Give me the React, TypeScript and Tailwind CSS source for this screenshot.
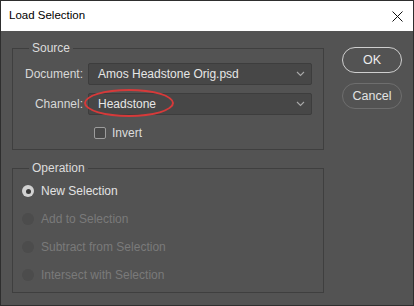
import { useState } from 'react';

const FONT = { fontFamily: '"Liberation Sans", Arial, sans-serif' };

function Chevron() {
  return (
    <svg width="9" height="6" viewBox="0 0 9 6" className="text-[#a8a8a8]">
      <path d="M1 1l3.5 3.5L8 1" fill="none" stroke="currentColor" strokeWidth="1.1" />
    </svg>
  );
}

function Select({ value }: { value: string }) {
  return (
    <div className="flex items-center justify-between h-[22px] w-[224px] bg-[#474747] border border-[#3d3d3d] rounded-[2px] pl-[9px] pr-[6px] text-[#e6e6e6]">
      <span>{value}</span>
      <Chevron />
    </div>
  );
}

function GroupBox({ label, children, className }: { label: string; children: React.ReactNode; className: string }) {
  return (
    <div className={`relative border border-[#3f3f3f] ${className}`}>
      <span className="absolute -top-[9px] left-[16px] px-[3px] bg-[#535353] leading-[16px] text-[#dcdcdc]">
        {label}
      </span>
      {children}
    </div>
  );
}

const OPERATIONS = ['New Selection', 'Add to Selection', 'Subtract from Selection', 'Intersect with Selection'];

export default function App() {
  const [invert, setInvert] = useState(false);

  return (
    <div
      className="w-[414px] h-[306px] border border-[#2e2e2e] bg-[#535353] text-[12px] flex flex-col overflow-hidden"
      style={FONT}
    >
      {/* title bar */}
      <div className="h-[30px] bg-white flex items-center justify-between pl-[8px] pr-[10px] shrink-0">
        <span className="text-[11.5px] text-black">Load Selection</span>
        <svg width="11" height="11" viewBox="0 0 11 11">
          <path d="M0.5 0.5l10 10M10.5 0.5l-10 10" stroke="#111" strokeWidth="1" />
        </svg>
      </div>

      <div className="flex pl-[11px]">
        <div className="w-[312px] pt-[17px]">
          <GroupBox label="Source" className="pt-[14px] pb-[10px]">
            <div className="flex items-center gap-[5px]">
              <span className="w-[70px] text-right text-[#d8d8d8]">Document:</span>
              <Select value="Amos Headstone Orig.psd" />
            </div>
            <div className="flex items-center gap-[5px] mt-[8px]">
              <span className="w-[70px] text-right text-[#d8d8d8]">Channel:</span>
              <div className="relative">
                <Select value="Headstone" />
                <div className="absolute -left-[4px] -top-[4px] w-[90px] h-[28px] rounded-[50%] border-2 border-[#d63a3a]" />
              </div>
            </div>
            <label className="flex items-center gap-[6px] mt-[12px] ml-[81px] h-[12px] cursor-pointer">
              <span
                onClick={() => setInvert(!invert)}
                className="w-[12px] h-[12px] rounded-[2px] border border-[#9c9c9c] bg-[#484848] flex items-center justify-center"
              >
                {invert && <span className="w-[6px] h-[6px] bg-[#d0d0d0]" />}
              </span>
              <span className="text-[#dcdcdc]">Invert</span>
            </label>
          </GroupBox>

          <GroupBox label="Operation" className="mt-[18px] pt-[16px] pb-[11px] pl-[9px]">
            <div className="flex flex-col gap-[16px]">
              {OPERATIONS.map((op, i) => (
                <div key={op} className="flex items-center gap-[7px] h-[12px]">
                  {i === 0 ? (
                    <span className="w-[12px] h-[12px] rounded-full bg-[#d2d2d2] flex items-center justify-center">
                      <span className="w-[5px] h-[5px] rounded-full bg-[#3a3a3a]" />
                    </span>
                  ) : (
                    <span className="w-[12px] h-[12px] rounded-full bg-[#4c4c4c]" />
                  )}
                  <span className={i === 0 ? 'text-[#e2e2e2]' : 'text-[#7a7a7a]'}>{op}</span>
                </div>
              ))}
            </div>
          </GroupBox>
        </div>

        <div className="ml-[18px] pt-[16px] flex flex-col gap-[10px]">
          <button className="w-[60px] h-[26px] rounded-full border-[1.5px] border-[#cfcfcf] text-[#ededed] text-[12.5px]">
            OK
          </button>
          <button className="w-[60px] h-[26px] rounded-full border border-[#6e6e6e] text-[#e2e2e2] text-[12.5px]">
            Cancel
          </button>
        </div>
      </div>
    </div>
  );
}
